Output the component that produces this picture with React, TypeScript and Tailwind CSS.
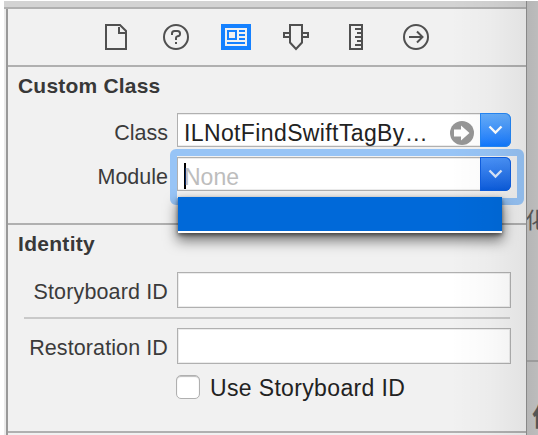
import type { ReactNode } from "react";

function Toolbar() {
  return (
    <div className="flex h-[56px] shrink-0 items-start pt-[14px] pl-[96px] text-[#505050]">
      <svg className="h-[28px] w-[24px]" viewBox="0 0 24 28" fill="none" stroke="currentColor" strokeWidth="2">
        <path d="M2 2H16L22 8V26H2Z" />
        <path d="M15 4V10H21" />
      </svg>
      <svg className="ml-[34px] h-[28px] w-[28px]" viewBox="0 0 28 28" fill="none" stroke="currentColor" strokeWidth="2">
        <circle cx="14" cy="14" r="12" />
        <path d="M10 12V10.500Q10 8 12.500 8H15.500Q18 8 18 10.500V11Q18 13 15.500 13.300Q14 13.600 14 15V17M14 19V21" />
      </svg>
      <svg className="ml-[30px] h-[28px] w-[32px]" viewBox="0 0 32 28" fill="none" stroke="#1581ff">
        <path d="M3 3H29V25H3Z" strokeWidth="4" />
        <path d="M8 8H16V16H8ZM19 8H25M19 12H25M19 16H25M7 20H25" strokeWidth="2" />
      </svg>
      <svg className="ml-[30px] h-[28px] w-[28px]" viewBox="0 0 28 28" fill="none" stroke="currentColor" strokeWidth="2">
        <path d="M8 2H20V19.500L14 26L8 19.500Z" />
        <path d="M8 10H2V14H8M20 10H26V14H20" />
      </svg>
      <svg className="ml-[38px] h-[28px] w-[16px]" viewBox="0 0 16 28" fill="none" stroke="currentColor" strokeWidth="2">
        <path d="M2 2H14V26H2Z" />
        <path d="M7 6H14M9 10H14M7 14H14M9 18H14M7 22H14" />
      </svg>
      <svg className="ml-[38px] h-[28px] w-[28px]" viewBox="0 0 28 28" fill="none" stroke="currentColor" strokeWidth="2">
        <circle cx="14" cy="14" r="12" />
        <path d="M7 14H20.500M15 8.500L20.500 14L15 19.500" />
      </svg>
    </div>
  );
}

function Label({ children, className }: { children: ReactNode; className: string }) {
  return (
    <div className="flex w-[169px] shrink-0 justify-end pr-[9px] pt-[8px]">
      <span className={`whitespace-nowrap text-[21.5px] leading-[24px] text-[#3b3b3b] ${className}`}>{children}</span>
    </div>
  );
}

function Chevron() {
  return (
    <svg className="h-[10px] w-[15px]" viewBox="0 0 15 10" fill="none" stroke="currentColor" strokeWidth="2.400">
      <path d="M1.500 1.500L7.500 7.500L13.500 1.500" />
    </svg>
  );
}

function Heading({ children, className }: { children: ReactNode; className: string }) {
  return <h2 className={`h-[24px] pl-[10px] text-[21px] leading-[24px] font-bold text-[#383838] ${className}`}>{children}</h2>;
}

function CustomClass() {
  return (
    <section className="flex h-[158px] shrink-0 flex-col border-b-2 border-[#b0b0b0]">
      <Heading className="mt-[7px] tracking-[0.200px]">Custom Class</Heading>
      <div className="mt-[15px] flex h-[34px]">
        <Label className="tracking-normal">Class</Label>
        <div className="flex h-[34px] w-[334px]">
          <div className="flex h-[34px] w-[303px] items-start border border-r-0 border-[#b0b0b0] bg-white shadow-[inset_0_1px_0_#ececec,inset_0_-1px_0_#ececec]">
            <span className="w-[265px] pt-[6px] pl-[6px] text-[23px] leading-[26px] tracking-[0.380px] whitespace-nowrap text-[#222]">ILNotFindSwiftTagBy…</span>
            <svg className="mt-[7px] ml-[7px] h-[24px] w-[24px] shrink-0" viewBox="0 0 24 24">
              <circle cx="12" cy="12" r="12" fill="#969696" />
              <path d="M4 8.500H11V4.500L19.500 12L11 19.500V15.500H4Z" fill="#fff" />
            </svg>
          </div>
          <div className="flex w-[31px] justify-center rounded-r-[6px] bg-linear-to-b from-[#68affa] to-[#0877ff] pt-[12px] text-white shadow-[inset_0_0_0_1px_#2586f4]">
            <Chevron />
          </div>
        </div>
      </div>
      <div className="mt-[10px] flex h-[34px]">
        <Label className="tracking-normal">Module</Label>
        <div className="relative flex h-[34px] w-[334px]">
          <div className="absolute -top-[8px] -left-[7px] h-[56px] w-[354px] rounded-[6px] border-[7px] border-[#97c4f6]" />
          <div className="flex h-[34px] w-[303px] items-start border border-r-0 border-[#b0b0b0] bg-white pl-[6px] shadow-[inset_0_1px_0_#ececec,inset_0_-1px_0_#ececec]">
            <span className="mt-[5px] h-[26px] w-[2px] bg-black" />
            <span className="-ml-[2px] pt-[6px] text-[23px] leading-[26px] text-[#bdbdbd]">None</span>
          </div>
          <div className="flex w-[31px] justify-center rounded-r-[6px] bg-linear-to-b from-[#4b94fa] to-[#075bdc] pt-[12px] text-[#d9e6fa] shadow-[inset_0_0_0_1px_#105fe0]">
            <Chevron />
          </div>
          <div className="absolute top-[40px] left-[1px] z-10 h-[36px] w-[324px] border-b-2 border-white bg-[#0069d9] shadow-[0_7px_13px_1px_rgba(0,0,0,0.5),0_2px_4px_rgba(0,0,0,0.5)]" />
        </div>
      </div>
    </section>
  );
}

function Identity() {
  return (
    <section className="flex h-[208px] shrink-0 flex-col border-b-2 border-[#b0b0b0]">
      <Heading className="mt-[7px] tracking-[0.300px]">Identity</Heading>
      <div className="mt-[16px] flex h-[36px]">
        <Label className="tracking-[0.140px]">Storyboard ID</Label>
        <div className="w-[334px] border border-[#b0b0b0] bg-white shadow-[inset_0_0_0_1px_#ececec]" />
      </div>
      <div className="mt-[9px] ml-[16px] h-[2px] w-[486px] bg-[#c9c9c9]" />
      <div className="mt-[9px] flex h-[36px]">
        <Label className="tracking-[0.100px]">Restoration ID</Label>
        <div className="w-[334px] border border-[#b0b0b0] bg-white shadow-[inset_0_0_0_1px_#ececec]" />
      </div>
      <div className="mt-[11px] flex h-[26px] pl-[168px]">
        <span className="h-[24px] w-[24px] rounded-[5px] border border-[#b0b0b0] bg-white shadow-[inset_0_1px_1px_#bdbdbd]" />
        <span className="ml-[10px] text-[23px] leading-[26px] tracking-[0.350px] whitespace-nowrap text-[#222]">Use Storyboard ID</span>
      </div>
    </section>
  );
}

export default function App() {
  return (
    <div className="flex h-[435px] w-[538px] overflow-hidden bg-white pt-px pl-[4px] font-['Liberation_Sans',Arial,sans-serif]">
      <div className="relative flex w-[522px] shrink-0 flex-col bg-[#ebebeb]">
        <div className="h-[8px] shrink-0 border-b-2 border-[#b0b0b0] bg-[#d3d3d3]" />
        <div className="ml-[2px] flex h-[426px] flex-col border-l-2 border-[#999] bg-[#f1f1f1]">
          <Toolbar />
          <div className="h-[2px] shrink-0 bg-[#b0b0b0]" />
          <CustomClass />
          <Identity />
        </div>
        <div className="absolute inset-y-0 right-0 z-20 w-[76px] bg-linear-to-r from-black/0 via-black/2 to-black/6" />
      </div>
      <aside className="flex w-[12px] shrink-0 flex-col overflow-hidden border-l border-[#888] bg-linear-to-r from-[#b6b6b6] to-[#bcbcbc] font-['Noto_Sans_CJK_SC',sans-serif] text-[#555]">
        <div className="h-[361px] shrink-0 border-b-2 border-[#9b9b9b] pt-[201px]">
          <span className="-ml-[2px] block text-[22px] leading-[32px] whitespace-nowrap">化</span>
        </div>
        <span className="mt-[36px] ml-[5px] block text-[26px] leading-[34px] font-bold whitespace-nowrap">作</span>
      </aside>
    </div>
  );
}
